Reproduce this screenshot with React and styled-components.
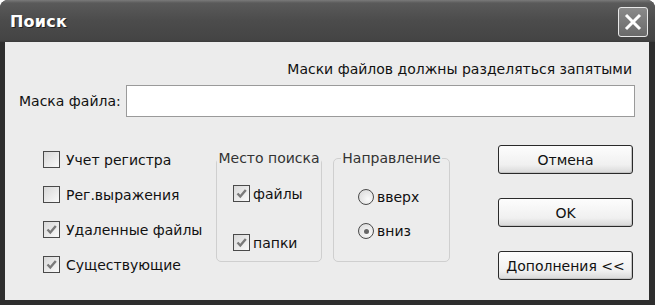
import React from "react";
import styled, { createGlobalStyle } from "styled-components";

const Global = createGlobalStyle`
  html, body { margin: 0; padding: 0; background: #fff; }
  body { font-family: "DejaVu Sans", "Liberation Sans", sans-serif; }
`;

const Window = styled.div`
  width: 655px;
  height: 305px;
  display: flex;
  flex-direction: column;
  background: #2e2e2e;
  border-radius: 8px 8px 0 0;
  overflow: hidden;
`;

const TitleBar = styled.div`
  height: 42px;
  flex: none;
  display: flex;
  align-items: center;
  justify-content: space-between;
  padding: 0 7px 0 10px;
  box-sizing: border-box;
  background: linear-gradient(#7a7a7a 0px, #5a5a5a 3px, #4c4c4c 20px, #444 40px, #3a3a3a 42px);
`;

const Title = styled.div`
  color: #fff;
  font-family: "DejaVu Sans", sans-serif;
  font-weight: bold;
  font-size: 16px;
  letter-spacing: 0.2px;
  text-shadow: 1px 1px 0 #222;
`;

const CloseButton = styled.div`
  width: 30px;
  height: 30px;
  box-sizing: border-box;
  border: 1px solid #e8e8e8;
  border-radius: 3px;
  background: linear-gradient(#8a8a8a, #6a6a6a);
  display: flex;
  align-items: center;
  justify-content: center;
  margin-top: 2px;
`;

const Body = styled.div`
  flex: 1;
  margin: 0 6px 5px 5px;
  background: #ececec;
  display: flex;
  flex-direction: column;
  padding: 19px 14px 0 14px;
  color: #111;
  font-size: 14px;
`;

const Hint = styled.div`
  text-align: right;
  line-height: 16px;
  padding-right: 3px;
`;

const MaskRow = styled.div`
  display: flex;
  align-items: center;
  margin-top: 8px;
  gap: 5px;
`;

const Label = styled.span`
  white-space: nowrap;
  line-height: 16px;
`;

const Input = styled.div`
  flex: 1;
  height: 32px;
  box-sizing: border-box;
  background: #fff;
  border: 1px solid #9a9a9a;
`;

const Bottom = styled.div`
  display: flex;
  margin-top: 25px;
  padding-left: 24px;
`;

const LeftCol = styled.div`
  width: 173px;
  display: flex;
  flex-direction: column;
`;

const Row = styled.div`
  display: flex;
  align-items: center;
  gap: ${(p) => p.$gap ?? 6}px;
  height: ${(p) => p.$h ?? 35}px;
`;

const Box = styled.span`
  width: 17px;
  height: 17px;
  box-sizing: border-box;
  border: 1px solid #4a4a4a;
  background: linear-gradient(135deg, #d8d8d8, #fafafa);
  display: inline-flex;
  align-items: center;
  justify-content: center;
  flex: none;
`;

const Radio = styled.span`
  width: 16px;
  height: 16px;
  box-sizing: border-box;
  border: 1px solid #4a4a4a;
  border-radius: 50%;
  background: radial-gradient(circle at 65% 65%, #fafafa, #d6d6d6);
  display: inline-flex;
  align-items: center;
  justify-content: center;
  flex: none;
`;

const Dot = styled.span`
  width: 5px;
  height: 5px;
  border-radius: 50%;
  background: #666;
`;

const Group = styled.fieldset`
  margin: 8px 0 0 ${(p) => p.$ml}px;
  padding: 0;
  width: ${(p) => p.$w}px;
  height: 112px;
  box-sizing: border-box;
  border: 1px solid #cfcfcf;
  border-radius: 5px;
  display: flex;
  flex-direction: column;
`;

const Legend = styled.legend`
  padding: 0 1px;
  margin: 0 auto;
  line-height: 16px;
  color: #333;
`;

const GroupInner = styled.div`
  display: flex;
  flex-direction: column;
  padding: ${(p) => p.$pad};
`;

const Buttons = styled.div`
  margin-left: auto;
  display: flex;
  flex-direction: column;
  gap: 24px;
  padding-top: 3px;
  padding-right: 2px;
`;

const Button = styled.div`
  width: 135px;
  height: 29px;
  box-sizing: border-box;
  border: 1px solid #2a2a2a;
  border-radius: 3px;
  background: linear-gradient(#fdfdfd, #f0f0f0 70%, #d8d8d8);
  box-shadow: inset -1px -1px 0 #c4c4c4;
  display: flex;
  align-items: center;
  justify-content: center;
  font-size: 14px;
  color: #111;
`;

const Check = () => (
  <svg width="13" height="13" viewBox="0 0 13 13">
    <path d="M2.5 6.5 L5.3 9.5 L10.8 3" fill="none" stroke="#7a7a7a" strokeWidth="2.4" />
  </svg>
);

const CheckBox = ({ checked, label, gap, h }) => (
  <Row $gap={gap} $h={h}>
    <Box>{checked && <Check />}</Box>
    <Label>{label}</Label>
  </Row>
);

const RadioItem = ({ checked, label }) => (
  <Row $gap={3} $h={34}>
    <Radio>{checked && <Dot />}</Radio>
    <Label>{label}</Label>
  </Row>
);

export default function App() {
  return (
    <>
      <Global />
      <Window>
        <TitleBar>
          <Title>Поиск</Title>
          <CloseButton>
            <svg width="20" height="20" viewBox="0 0 20 20">
              <path d="M3 3 L17 17 M17 3 L3 17" stroke="#fff" strokeWidth="3" />
            </svg>
          </CloseButton>
        </TitleBar>
        <Body>
          <Hint>Маски файлов должны разделяться запятыми</Hint>
          <MaskRow>
            <Label>Маска файла:</Label>
            <Input />
          </MaskRow>
          <Bottom>
            <LeftCol>
              <CheckBox label="Учет регистра" />
              <CheckBox label="Рег.выражения" />
              <CheckBox checked label="Удаленные файлы" />
              <CheckBox checked label="Существующие" />
            </LeftCol>
            <Group $w={106} $ml={0}>
              <Legend>Место поиска</Legend>
              <GroupInner $pad="10px 0 0 16px">
                <CheckBox checked label="файлы" gap={3} h={35} />
                <Row $h={14} />
                <CheckBox checked label="папки" gap={3} h={35} />
              </GroupInner>
            </Group>
            <Group $w={117} $ml={11}>
              <Legend>Направление</Legend>
              <GroupInner $pad="14px 0 0 24px">
                <RadioItem label="вверх" />
                <RadioItem checked label="вниз" />
              </GroupInner>
            </Group>
            <Buttons>
              <Button>Отмена</Button>
              <Button>OK</Button>
              <Button>Дополнения &lt;&lt;</Button>
            </Buttons>
          </Bottom>
        </Body>
      </Window>
    </>
  );
}
